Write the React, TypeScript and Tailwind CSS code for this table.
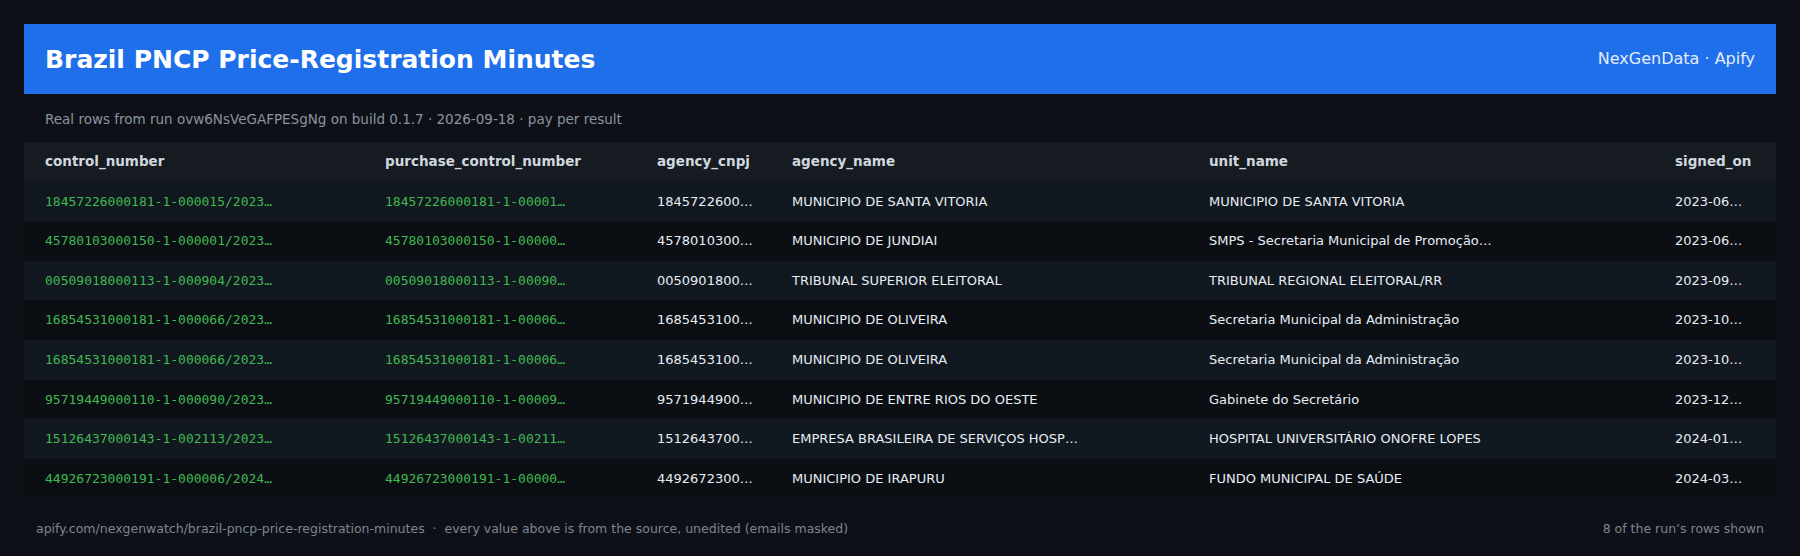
import React from 'react';

interface Row {
    control: string;
    purchase: string;
    cnpj: string;
    agency: string;
    unit: string;
    signed: string;
}

const rows: Row[] = [
    { control: '18457226000181-1-000015/2023…', purchase: '18457226000181-1-00001…', cnpj: '1845722600…', agency: 'MUNICIPIO DE SANTA VITORIA', unit: 'MUNICIPIO DE SANTA VITORIA', signed: '2023-06…' },
    { control: '45780103000150-1-000001/2023…', purchase: '45780103000150-1-00000…', cnpj: '4578010300…', agency: 'MUNICIPIO DE JUNDIAI', unit: 'SMPS - Secretaria Municipal de Promoção…', signed: '2023-06…' },
    { control: '00509018000113-1-000904/2023…', purchase: '00509018000113-1-00090…', cnpj: '0050901800…', agency: 'TRIBUNAL SUPERIOR ELEITORAL', unit: 'TRIBUNAL REGIONAL ELEITORAL/RR', signed: '2023-09…' },
    { control: '16854531000181-1-000066/2023…', purchase: '16854531000181-1-00006…', cnpj: '1685453100…', agency: 'MUNICIPIO DE OLIVEIRA', unit: 'Secretaria Municipal da Administração', signed: '2023-10…' },
    { control: '16854531000181-1-000066/2023…', purchase: '16854531000181-1-00006…', cnpj: '1685453100…', agency: 'MUNICIPIO DE OLIVEIRA', unit: 'Secretaria Municipal da Administração', signed: '2023-10…' },
    { control: '95719449000110-1-000090/2023…', purchase: '95719449000110-1-00009…', cnpj: '9571944900…', agency: 'MUNICIPIO DE ENTRE RIOS DO OESTE', unit: 'Gabinete do Secretário', signed: '2023-12…' },
    { control: '15126437000143-1-002113/2023…', purchase: '15126437000143-1-00211…', cnpj: '1512643700…', agency: 'EMPRESA BRASILEIRA DE SERVIÇOS HOSP…', unit: 'HOSPITAL UNIVERSITÁRIO ONOFRE LOPES', signed: '2024-01…' },
    { control: '44926723000191-1-000006/2024…', purchase: '44926723000191-1-00000…', cnpj: '4492672300…', agency: 'MUNICIPIO DE IRAPURU', unit: 'FUNDO MUNICIPAL DE SAÚDE', signed: '2024-03…' },
];

const columns = ['control_number', 'purchase_control_number', 'agency_cnpj', 'agency_name', 'unit_name', 'signed_on'];

const grid = 'grid grid-cols-[340px_272px_135px_417px_466px_122px]';
const cell = 'px-[21px] py-[10px] whitespace-nowrap overflow-hidden';

const App: React.FC = () => {
    return (
        <div className="min-h-[556px] bg-[#0d1117] p-6 font-['DejaVu_Sans',sans-serif] text-[#e6edf3]">
            {/* header */}
            <div className="h-[70px] bg-[#1f6feb] px-[21px] flex items-center justify-between">
                <h1 className="text-[25px] font-bold text-white leading-none">Brazil PNCP Price-Registration Minutes</h1>
                <span className="text-[16px] text-[#e3ecfb]">NexGenData · Apify</span>
            </div>

            <div className="px-[21px] pt-[17px] pb-[15px] text-[13.5px] leading-4 text-[#8b949e]">
                Real rows from run ovw6NsVeGAFPESgNg on build 0.1.7 · 2026-09-18 · pay per result
            </div>

            {/* table */}
            <div className="text-[13px] leading-[19.6px]">
                <div className={`${grid} bg-[#161b22]`}>
                    {columns.map((c) => (
                        <div key={c} className={`${cell} font-bold text-[13.5px] text-[#d0d7de]`}>{c}</div>
                    ))}
                </div>
                {rows.map((r, i) => (
                    <div key={i} className={`${grid} ${i % 2 === 0 ? 'bg-[#121820]' : 'bg-[#0b0e13]'}`}>
                        <div className={`${cell} font-['DejaVu_Sans_Mono',monospace] text-[#3fb950]`}>{r.control}</div>
                        <div className={`${cell} font-['DejaVu_Sans_Mono',monospace] text-[#3fb950]`}>{r.purchase}</div>
                        <div className={cell}>{r.cnpj}</div>
                        <div className={cell}>{r.agency}</div>
                        <div className={cell}>{r.unit}</div>
                        <div className={cell}>{r.signed}</div>
                    </div>
                ))}
            </div>

            {/* footer */}
            <div className="flex justify-between px-3 pt-[22px] text-[12.5px] leading-[18px] text-[#7d8590]">
                <span>apify.com/nexgenwatch/brazil-pncp-price-registration-minutes&nbsp; · &nbsp;every value above is from the source, unedited (emails masked)</span>
                <span>8 of the run’s rows shown</span>
            </div>
        </div>
    );
};

export default App;
